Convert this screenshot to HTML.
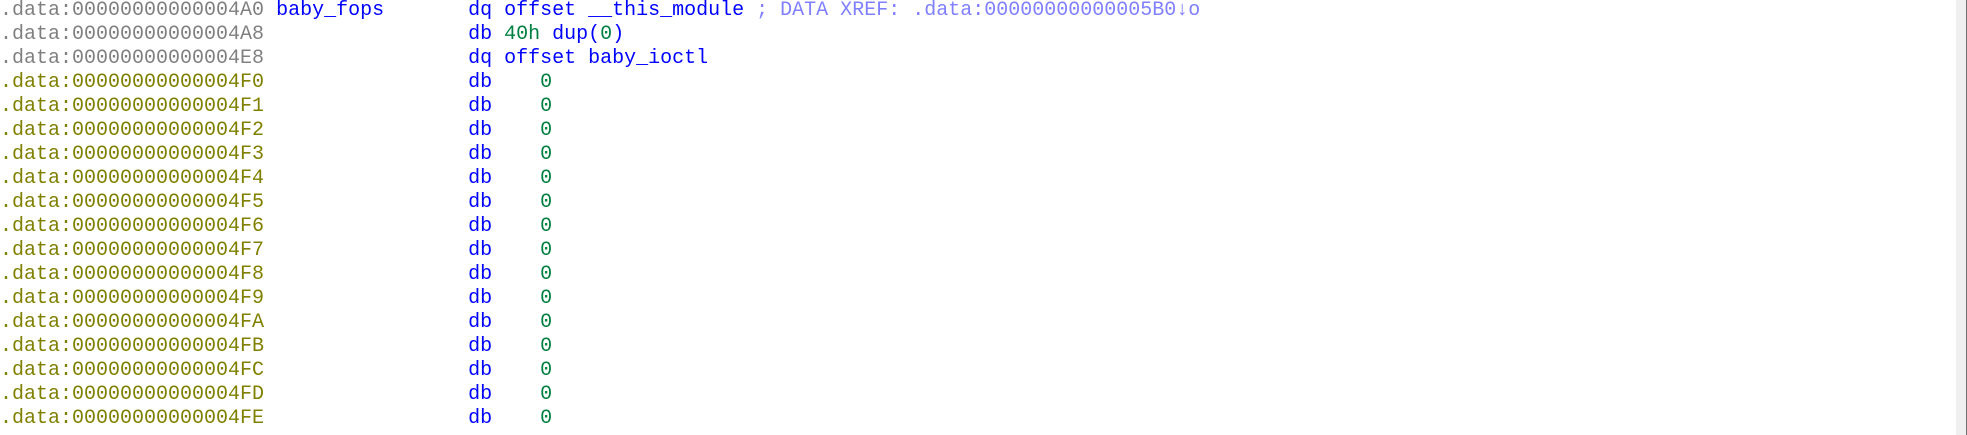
<!DOCTYPE html>
<html><head><meta charset="utf-8"><style>
html,body{margin:0;padding:0;background:#fff;width:1967px;height:435px;overflow:hidden;}
pre{margin:0;position:absolute;left:0;top:-1px;font-family:"Liberation Mono",monospace;font-size:20px;line-height:24px;color:#000080;}
.g{color:#808080}.o{color:#808000}.b{color:#0000ff}.n{color:#008040}.c{color:#8080ff}
.sb{position:absolute;left:1956px;top:0;width:10px;height:435px;background:#f0f0f0;}
.ln{position:absolute;left:1966px;top:0;width:1px;height:435px;background:#707070;}
</style></head><body>
<pre><span class="g">.data:00000000000004A0</span> <span class="b">baby_fops</span>       <span class="b">dq offset __this_module</span> <span class="c">; DATA XREF: .data:00000000000005B0↓o</span>
<span class="g">.data:00000000000004A8</span>                 <span class="b">db</span> <span class="n">40h</span> <span class="b">dup(</span><span class="n">0</span><span class="b">)</span>
<span class="g">.data:00000000000004E8</span>                 <span class="b">dq offset baby_ioctl</span>
<span class="o">.data:00000000000004F0</span>                 <span class="b">db</span>    <span class="n">0</span>
<span class="o">.data:00000000000004F1</span>                 <span class="b">db</span>    <span class="n">0</span>
<span class="o">.data:00000000000004F2</span>                 <span class="b">db</span>    <span class="n">0</span>
<span class="o">.data:00000000000004F3</span>                 <span class="b">db</span>    <span class="n">0</span>
<span class="o">.data:00000000000004F4</span>                 <span class="b">db</span>    <span class="n">0</span>
<span class="o">.data:00000000000004F5</span>                 <span class="b">db</span>    <span class="n">0</span>
<span class="o">.data:00000000000004F6</span>                 <span class="b">db</span>    <span class="n">0</span>
<span class="o">.data:00000000000004F7</span>                 <span class="b">db</span>    <span class="n">0</span>
<span class="o">.data:00000000000004F8</span>                 <span class="b">db</span>    <span class="n">0</span>
<span class="o">.data:00000000000004F9</span>                 <span class="b">db</span>    <span class="n">0</span>
<span class="o">.data:00000000000004FA</span>                 <span class="b">db</span>    <span class="n">0</span>
<span class="o">.data:00000000000004FB</span>                 <span class="b">db</span>    <span class="n">0</span>
<span class="o">.data:00000000000004FC</span>                 <span class="b">db</span>    <span class="n">0</span>
<span class="o">.data:00000000000004FD</span>                 <span class="b">db</span>    <span class="n">0</span>
<span class="o">.data:00000000000004FE</span>                 <span class="b">db</span>    <span class="n">0</span></pre>
<div class="sb"></div><div class="ln"></div>
</body></html>
